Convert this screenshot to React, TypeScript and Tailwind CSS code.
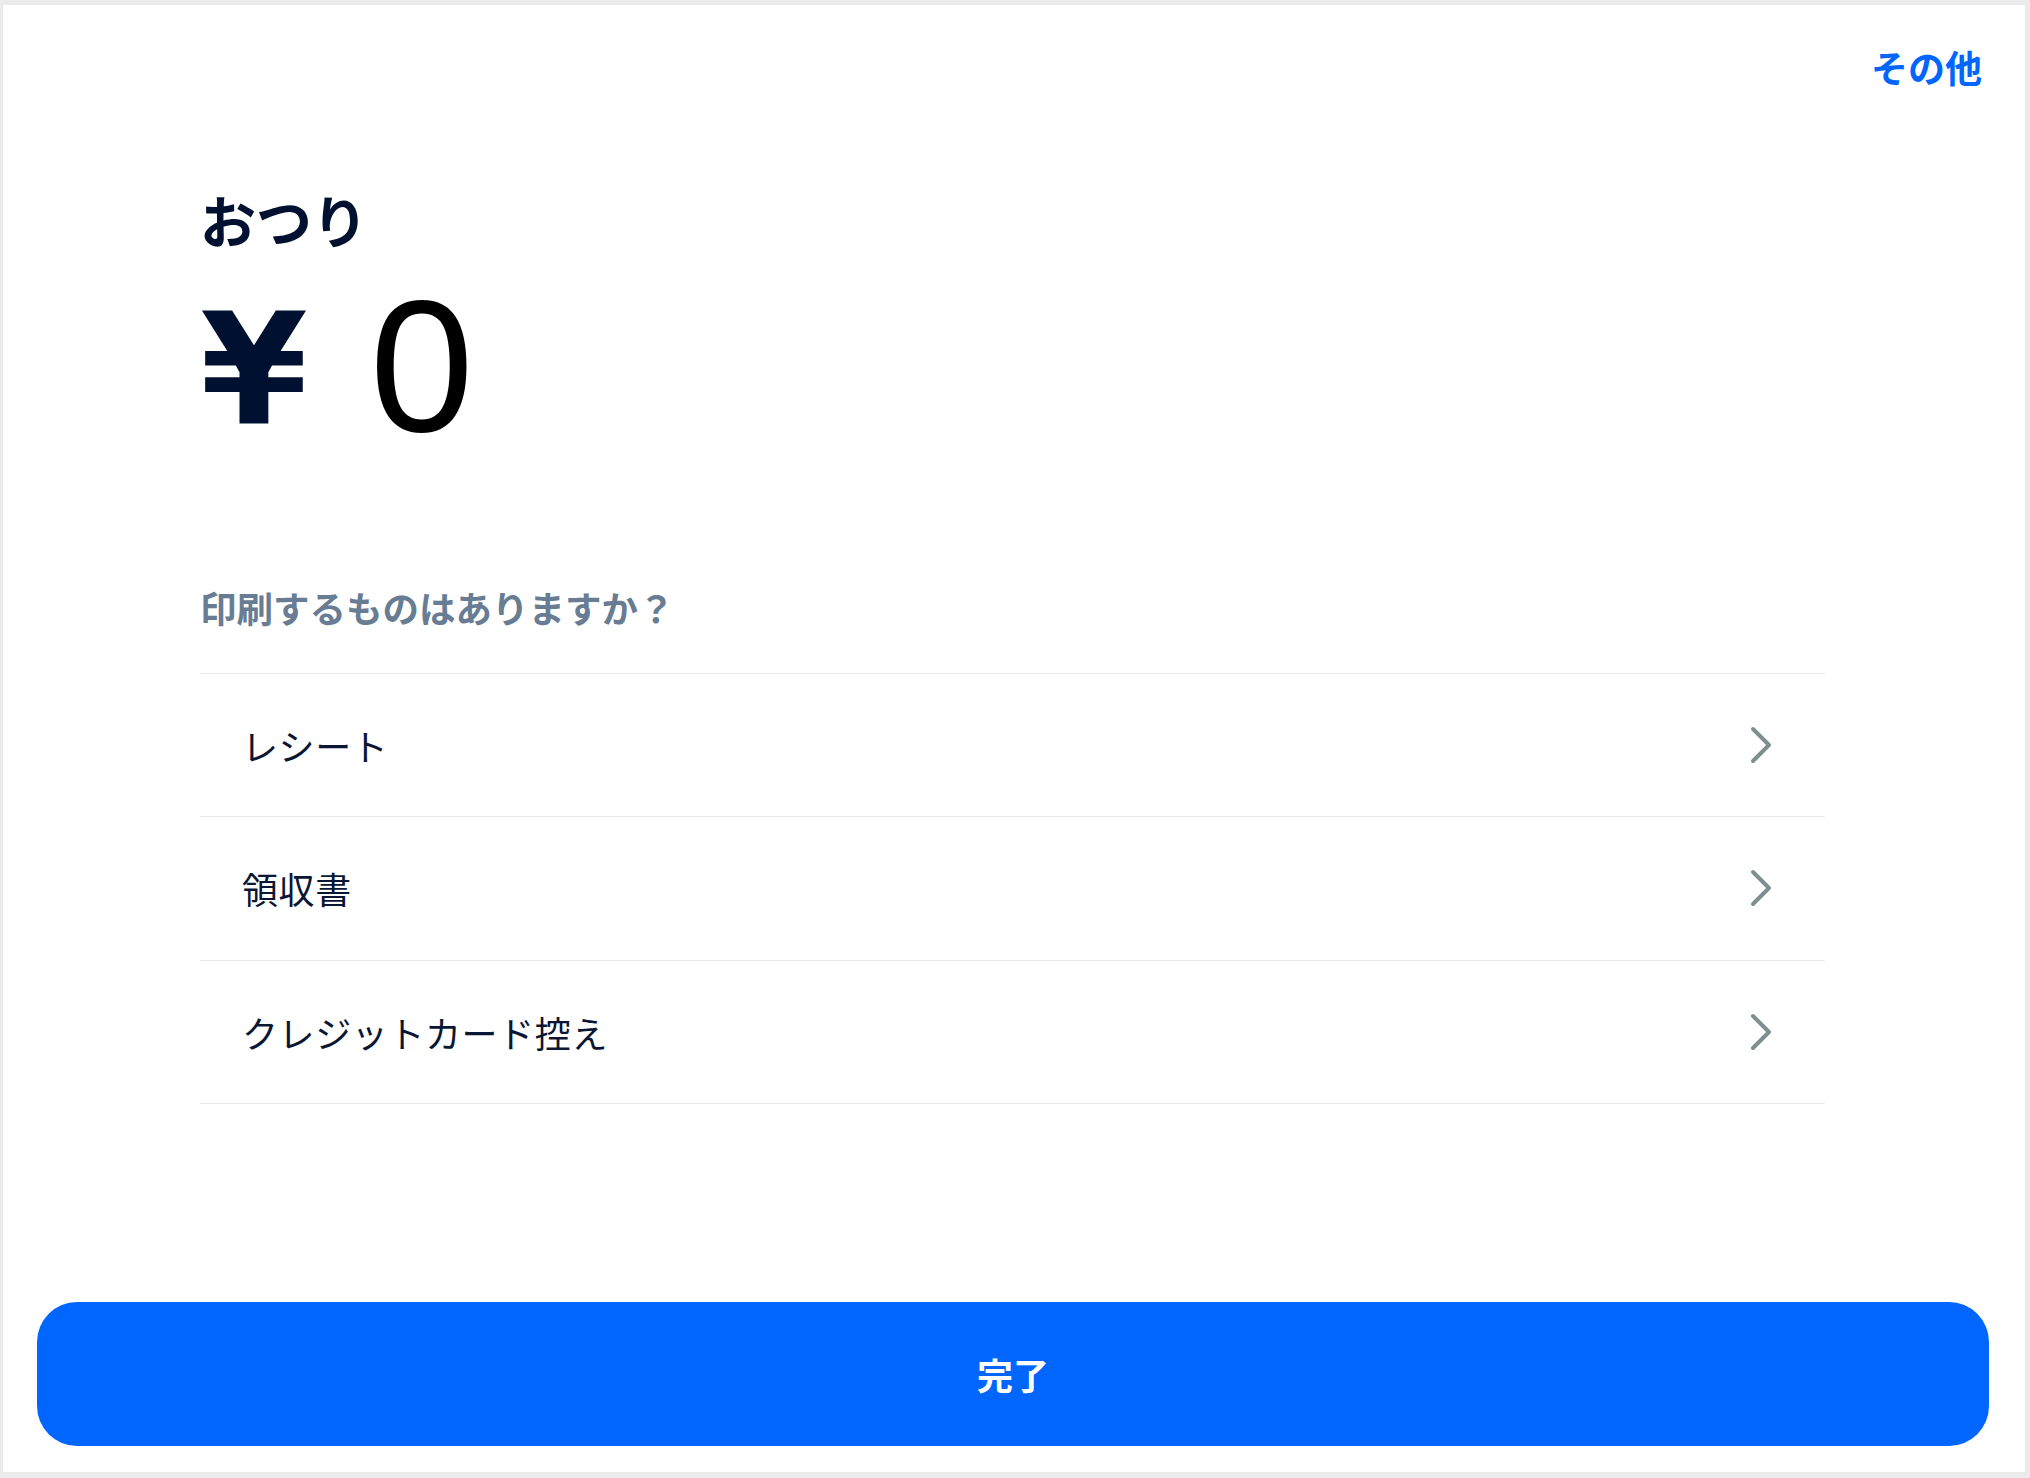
import React from 'react';

const jp = '[font-family:"Noto_Sans_CJK_JP","Noto_Sans",sans-serif]';

const printOptions = ['レシート', '領収書', 'クレジットカード控え'];

// Simple right chevron used on each print row
const Chevron = () => (
  <svg width="24" height="40" viewBox="0 0 24 40" fill="none">
    <path d="M4 4 L20 20 L4 36" stroke="#7d8f8f" strokeWidth="4" strokeLinecap="round" strokeLinejoin="round" />
  </svg>
);

const App = () => {
  return (
    <div className={`h-screen w-full bg-[#ebebeb] pt-[5px] pl-[3px] pr-[5px] pb-[6px] ${jp}`}>
      <div className="flex h-full flex-col bg-white">
        {/* Header */}
        <div className="flex justify-end pt-[44px] pr-[43px]">
          <button className="text-[37px] leading-none font-bold text-[#0066ff]">その他</button>
        </div>

        {/* Change amount */}
        <div className="pl-[197px]">
          <h1 className="mt-[105px] text-[56px] leading-none font-bold text-[#001030]">おつり</h1>
          <div className="mt-[19px] flex h-[200px] items-center">
            <span className="mt-[8px] text-[155px] leading-none font-bold text-[#001030] [font-family:'DejaVu_Sans',sans-serif]">¥</span>
            <span className="ml-[62px] text-[187px] leading-none text-black [font-family:'Liberation_Sans',Arial,sans-serif]">0</span>
          </div>
        </div>

        {/* Print options */}
        <div className="pl-[197px] pr-[200px]">
          <p className="mt-[124px] text-[36.5px] leading-none font-bold text-[#687d93]">印刷するものはありますか？</p>
          <div className="mt-[46px] border-t border-[#ebebeb]">
            {printOptions.map((label) => (
              <div
                key={label}
                className="flex h-[143.5px] items-center justify-between border-b border-[#ebebeb] pl-[42px] pr-[52px]"
              >
                <span className="text-[36px] leading-none tracking-[0.6px] text-[#0a1633]">{label}</span>
                <Chevron />
              </div>
            ))}
          </div>
        </div>

        <div className="flex-1" />

        {/* Done button */}
        <div className="ml-[34px] mr-[36px] mb-[26px]">
          <button className="flex h-[144px] w-full items-center justify-center rounded-[40px] bg-[#0066ff] text-[36px] leading-none font-bold text-white">
            完了
          </button>
        </div>
      </div>
    </div>
  );
};

export default App;
